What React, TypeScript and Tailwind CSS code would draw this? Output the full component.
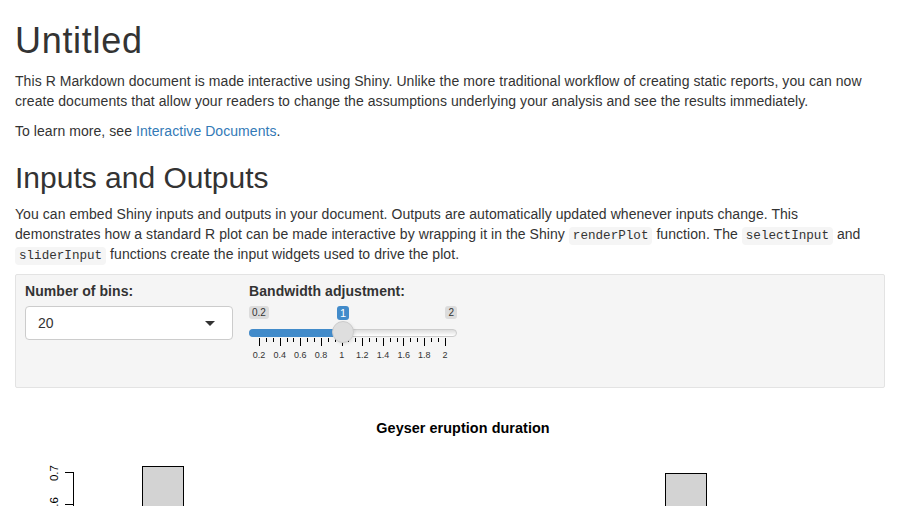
import React from "react";

const tickLabels = ["0.2", "0.4", "0.6", "0.8", "1", "1.2", "1.4", "1.6", "1.8", "2"];

const Code = ({ children }: { children: React.ReactNode }) => (
  <code className="font-['Liberation_Mono','Courier_New',monospace] text-[12.6px] leading-none tracking-normal bg-[#f5f5f5] rounded-[4px] px-[4px] py-[2px]">
    {children}
  </code>
);

const SelectBox = () => {
  return (
    <div className="w-[208px]">
      <label className="block font-bold mb-[5px]">Number of bins:</label>
      <div className="relative h-[34px] bg-white border border-[#cccccc] rounded-[4px] flex items-center pl-[12px]">
        <span>20</span>
        {/* caret */}
        <span className="absolute right-[17px] top-[14px] w-0 h-0 border-t-[5px] border-t-[#333333] border-x-[5px] border-x-transparent" />
      </div>
    </div>
  );
};

const Slider = () => {
  const ticks = Array.from({ length: 28 }, (_, i) => i % 3 === 0);
  return (
    <div className="w-[208px]">
      <label className="block font-bold mb-[5px]">Bandwidth adjustment:</label>

      {/* min / value / max bubbles */}
      <div className="relative mt-[4px] h-[14px] flex justify-between items-start text-[10px] leading-[13px] tracking-normal">
        <span className="h-[13px] px-[3px] rounded-[3px] bg-[#dcdcdc] text-[#333]">0.2</span>
        <span className="h-[13px] px-[3px] rounded-[3px] bg-[#dcdcdc] text-[#333]">2</span>
        <span className="absolute left-[88px] top-0 h-[14px] px-[3px] rounded-[3px] bg-[#428bca] text-[11px] leading-[14px] text-white">1</span>
      </div>

      {/* track */}
      <div className="relative mt-[9px] h-[8px] rounded-full border border-[#cccccc] bg-gradient-to-b from-[#dddddd] to-white">
        <div className="absolute -left-px -top-px w-[94px] h-[8px] rounded-l-full bg-[#428bca]" />
        <div className="absolute left-[82px] -top-[9px] w-[22px] h-[22px] rounded-full bg-[#dedede] border border-[#cccccc] shadow-[1px_1px_3px_rgba(0,0,0,0.08)]" />
      </div>

      {/* grid */}
      <div className="ml-[10px] mt-px w-[187px] h-[8px] flex justify-between items-start">
        {ticks.map((major, i) => (
          <span key={i} className={major ? "w-px h-[8px] bg-black" : "w-px h-[4px] bg-black"} />
        ))}
      </div>
      <div className="-ml-[0.33px] mt-[3px] w-[206.7px] grid grid-cols-10 text-[9px] leading-[12px] text-[#333] tracking-normal">
        {tickLabels.map((t) => (
          <span key={t} className="text-center">
            {t}
          </span>
        ))}
      </div>
    </div>
  );
};

const Histogram = () => {
  return (
    <svg width="870" height="140" viewBox="0 0 870 140" className="block mt-[10px]">
      <text x="448" y="35" textAnchor="middle" fontFamily="Liberation Sans, Arial, sans-serif" fontWeight="bold" fontSize="14.4" fill="#000">
        Geyser eruption duration
      </text>
      {/* y axis */}
      <line x1="58.5" y1="74" x2="58.5" y2="140" stroke="#000" strokeWidth="1" />
      <line x1="50" y1="74.5" x2="58.5" y2="74.5" stroke="#000" strokeWidth="1" />
      <line x1="50" y1="106.5" x2="58.5" y2="106.5" stroke="#000" strokeWidth="1" />
      <text x="43" y="75" transform="rotate(-90 43 75)" textAnchor="middle" fontFamily="Liberation Sans, Arial, sans-serif" fontSize="11.5" fill="#000">
        0.7
      </text>
      <text x="43" y="107" transform="rotate(-90 43 107)" textAnchor="middle" fontFamily="Liberation Sans, Arial, sans-serif" fontSize="11.5" fill="#000">
        0.6
      </text>
      {/* bars */}
      <rect x="127.5" y="68.5" width="41" height="100" fill="#d3d3d3" stroke="#000" strokeWidth="1" />
      <rect x="650.5" y="75.5" width="41" height="100" fill="#d3d3d3" stroke="#000" strokeWidth="1" />
    </svg>
  );
};

export default function App() {
  return (
    <div className="min-h-screen bg-white text-[#333333] text-[14px] leading-[20px] tracking-[0.06px] font-['Liberation_Sans',Arial,sans-serif] px-[15px] overflow-hidden">
      <h1 className="text-[36px] leading-[1.1] tracking-[0.7px] mt-[21px] mb-[10px]">Untitled</h1>
      <p className="mb-[10px]">
        This R Markdown document is made interactive using Shiny. Unlike the more traditional workflow of creating static
        reports, you can now create documents that allow your readers to change the assumptions underlying your analysis
        and see the results immediately.
      </p>
      <p className="mb-[20px]">
        To learn more, see <a className="text-[#337ab7]">Interactive Documents</a>.
      </p>

      <h2 className="text-[30px] leading-[1.1] tracking-normal mb-[10px]">Inputs and Outputs</h2>
      <p>
        You can embed Shiny inputs and outputs in your document. Outputs are automatically updated whenever inputs change.
        This demonstrates how a standard R plot can be made interactive by wrapping it in the Shiny <Code>renderPlot</Code>{" "}
        function. The <Code>selectInput</Code> and <Code>sliderInput</Code> functions create the input widgets used to
        drive the plot.
      </p>

      {/* input panel */}
      <div className="mt-[10px] h-[114px] bg-[#f5f5f5] border border-[#e3e3e3] rounded-[2px] pt-[6px] pl-[9px] flex gap-[16px]">
        <SelectBox />
        <Slider />
      </div>

      <Histogram />
    </div>
  );
}
